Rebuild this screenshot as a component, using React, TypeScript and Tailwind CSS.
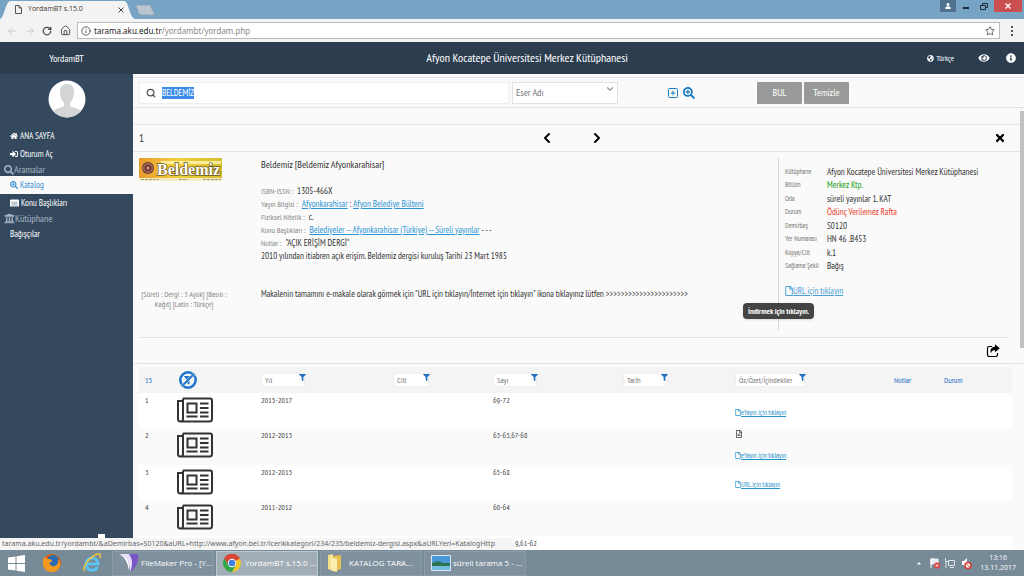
import type { ReactNode } from "react";
import clsx from "clsx";
import {
  FaEye,
  FaFilter,
  FaGlobeAmericas,
  FaHome,
  FaInfoCircle,
  FaRegFile,
  FaRegFileAlt,
  FaSearch,
  FaSearchPlus,
  FaSignInAlt,
  FaTimes,
  FaUniversity,
  FaUser,
} from "react-icons/fa";
import {
  ArrowLeft,
  ArrowRight,
  ChevronDown,
  ChevronLeft,
  ChevronRight,
  House,
  Info,
  RotateCw,
  Search,
  SquarePlus,
  Star,
} from "lucide-react";

const details = [
  { label: "Kütüphane", value: "Afyon Kocatepe Üniversitesi Merkez Kütüphanesi" },
  { label: "Bölüm", value: "Merkez Ktp.", color: "text-[#16a016]" },
  { label: "Oda", value: "süreli yayınlar 1. KAT" },
  { label: "Durum", value: "Ödünç Verilemez Rafta", color: "text-[#f0402c]" },
  { label: "Demirbaş", value: "S0120" },
  { label: "Yer Numarası", value: "HN 46 .B453" },
  { label: "Kopya/Cilt", value: "k.1" },
  { label: "Sağlama Şekli", value: "Bağış" },
];

const issues = [
  { no: 1, year: "2015-2017", issue: "69-72", link: "eYayın için tıklayın", doc: false, height: "h-[35px]", gap: "pt-[12px]" },
  { no: 2, year: "2012-2013", issue: "63-65,67-68", link: "eYayın için tıklayın", doc: true, height: "h-[37px]", gap: "pt-[10px]" },
  { no: 3, year: "2012-2013", issue: "65-68", link: "URL için tıklayın", doc: false, height: "h-[35px]", gap: "pt-[12px]" },
  { no: 4, year: "2011-2012", issue: "60-64", link: "", doc: false, height: "h-[36px]", gap: "" },
];

const filters = [
  { label: "Yıl", width: "w-11" },
  { label: "Cilt", width: "w-9" },
  { label: "Sayı", width: "w-11" },
  { label: "Tarih", width: "w-11" },
  { label: "Öz/Özet/İçindekiler", width: "w-[70px]" },
];

const NewspaperIcon = () => (
  <svg viewBox="0 0 36 26" className="h-[26px] w-9" fill="none" stroke="#333" strokeWidth="2">
    <path d="M6 1.5H33a2 2 0 0 1 2 2V22a2.5 2.5 0 0 1-2.500 2.500H3.500A2.500 2.500 0 0 1 1 22V4H6M6 1.500V22a2.500 2.500 0 0 1-2.500 2.500" />
    <path d="M10.500 6.500h9v9h-9zM9.500 19.500h11M23 6.500h8.500M23 11h8.500M23 15.500h8.500M23 19.500h8.500" />
  </svg>
);

const ShareIcon = () => (
  <svg viewBox="0 0 14 14" className="h-3.5 w-3.5" fill="none">
    <path d="M6 2.500H3.200A1.700 1.700 0 0 0 1.500 4.200v6.600a1.700 1.700 0 0 0 1.700 1.700h6.600a1.700 1.700 0 0 0 1.700-1.700V9" stroke="#000" strokeWidth="1.200" />
    <path d="M9 .3 13.800 4.300 9 8.300V6.200C6.500 6.100 5.400 7 5.200 9.200 3.400 5.500 5.300 3 9 2.700z" fill="#000" />
  </svg>
);

const ClearFilterIcon = () => (
  <svg viewBox="0 0 18 18" className="h-[18px] w-[18px]">
    <circle cx="9" cy="9" r="7.700" fill="none" stroke="#1a74cc" strokeWidth="2.500" />
    <path d="M5 5h8.500L10.500 9v4.500L7.500 12V9z" fill="#1a74cc" />
    <path d="M3.500 14.500l11-11" stroke="#f4f4f4" strokeWidth="3" />
    <path d="M3.500 14.500l11-11" stroke="#1a74cc" strokeWidth="1.800" />
  </svg>
);

const CardIcon = () => (
  <svg viewBox="0 0 10 8" className="h-2 w-[9px]">
    <rect width="10" height="8" rx="1" fill="#fff" />
    <path d="M1.500 3h7M1.500 4.700h7M1.500 6.400h7" stroke="#7c8fa5" strokeWidth=".8" />
  </svg>
);

const CoverBanner = () => (
  <svg viewBox="0 0 83 23" className="h-[23px] w-[83px]" role="img" aria-label="Beldemiz">
    <defs>
      <linearGradient id="cover">
        <stop offset="0" stopColor="#e89a2c" />
        <stop offset=".45" stopColor="#f3cf3c" />
        <stop offset="1" stopColor="#d3bd2b" />
      </linearGradient>
    </defs>
    <rect width="83" height="20" fill="url(#cover)" />
    <path d="M22 3h60v3H22z" fill="#fff6b8" opacity=".8" />
    <circle cx="9" cy="10" r="6" fill="#713a38" />
    <circle cx="9" cy="10" r="4.300" fill="none" stroke="#d79a75" strokeWidth=".8" />
    <circle cx="9" cy="10" r="1.500" fill="#d79a75" />
    <text
      x="18"
      y="17"
      fontFamily="Liberation Serif, serif"
      fontWeight="bold"
      fontSize="16"
      fill="#fff"
      stroke="#6b5a22"
      strokeWidth="1.400"
      paintOrder="stroke"
    >
      Beldemiz
    </text>
    <path d="M0 20h83v3H0z" fill="#f4edc4" />
    <path d="M2 21.500h18M40 21.500h9M64 21.500h18" stroke="#a39b78" strokeWidth="1" strokeDasharray="3 1" />
  </svg>
);

const TabStrip = () => (
  <div className="flex h-[19px] shrink-0 items-start bg-[#77a3c4]">
    <div className="relative h-[19px] w-[134px]">
      <svg viewBox="0 0 160 19" className="absolute left-0 top-0 h-[19px] w-40">
        <path d="M0 19C5 17 5 1 11 1H124c5 0 5 16 11 18z" fill="#f3f3f3" />
        <path d="M136 5h14l5 10h-14c-3 0-5-10-5-10z" fill="#b9c6d1" stroke="#8ba0b1" strokeWidth=".8" />
      </svg>
      <div className="relative flex h-[19px] items-center pl-[15px] pr-2.5 text-[7px] text-[#333]">
        <svg viewBox="0 0 7 9" className="mr-1.5 h-[9px] w-[7px]" fill="none" stroke="#555">
          <path d="M.5.5h3.500l2.500 2.500v5.500h-6zM4 .5V3h2.500" />
        </svg>
        <span className="flex-1">YordamBT s.15.0</span>
        <button aria-label="Sekmeyi kapat">
          <svg viewBox="0 0 6 6" className="h-1.5 w-1.5" stroke="#444">
            <path d="M.5.500l5 5M5.500.500l-5 5" />
          </svg>
        </button>
      </div>
    </div>
    <div className="flex-1" />
    <button aria-label="Profil" className="flex h-3 w-4 items-center justify-center bg-[#4f718c] text-white">
      <FaUser className="h-1.5 w-1.5" />
    </button>
    <button aria-label="Simge durumuna küçült" className="flex h-3 w-5 items-center justify-center">
      <span className="mt-1 h-0.5 w-1.5 bg-[#1d2b38]" />
    </button>
    <button aria-label="Önceki boyut" className="flex h-3 w-4 items-center justify-center">
      <svg viewBox="0 0 8 7" className="h-[7px] w-2" fill="none" stroke="#1d2b38">
        <path d="M2.500 2V.5h5v4H6M.5 2.500h5v4h-5z" />
      </svg>
    </button>
    <button aria-label="Kapat" className="ml-0.5 mr-0.5 flex h-3 w-7 items-center justify-center bg-[#c9504f]">
      <svg viewBox="0 0 6 6" className="h-1.5 w-1.5" stroke="#fff" strokeWidth="1.300">
        <path d="M.5.500l5 5M5.500.500l-5 5" />
      </svg>
    </button>
  </div>
);

const AddressBar = () => (
  <div className="flex h-[23px] shrink-0 items-center bg-[#f3f3f3] pl-1.5">
    <ArrowLeft className="h-3 w-3 text-[#ccc]" />
    <ArrowRight className="ml-1.5 h-3 w-3 text-[#ccc]" />
    <RotateCw className="ml-1.5 h-2.5 w-2.5 text-[#444]" strokeWidth={3} />
    <House className="ml-2 h-[11px] w-[11px] text-[#444]" strokeWidth={2} />
    <div className="ml-1.5 flex h-[17px] flex-1 items-center border border-[#bbb] bg-white pl-[3px] pr-1 text-[8px]">
      <Info className="mr-[3px] h-2.5 w-2.5 shrink-0 text-[#444]" />
      <span className="flex-1 font-['Noto_Sans',sans-serif] text-[#888]">
        <span className="text-[#222]">tarama.aku.edu.tr</span>/yordambt/yordam.php
      </span>
      <Star className="h-2.5 w-2.5 text-[#444]" />
    </div>
    <button aria-label="Menü" className="flex w-6 flex-col items-center gap-0.5">
      <span className="h-0.5 w-0.5 bg-[#555]" />
      <span className="h-0.5 w-0.5 bg-[#555]" />
      <span className="h-0.5 w-0.5 bg-[#555]" />
    </button>
  </div>
);

const AppHeader = () => (
  <header className="flex h-8 shrink-0 items-center bg-[#2c3d50] text-white">
    <div className="w-[133px] text-center text-[10px]">YordamBT</div>
    <h1 className="flex-1 pr-1.5 text-center text-[12px]">Afyon Kocatepe Üniversitesi Merkez Kütüphanesi</h1>
    <div className="mr-2 flex items-center">
      <button className="flex items-center gap-0.5 text-[8px]">
        <FaGlobeAmericas className="h-[7px] w-[7px]" /> Türkçe
      </button>
      <button aria-label="Görünüm" className="ml-6">
        <FaEye className="h-2.5 w-3" />
      </button>
      <button aria-label="Bilgi" className="ml-4">
        <FaInfoCircle className="h-2.5 w-2.5" />
      </button>
    </div>
  </header>
);

const SideLink = ({ icon, children, active }: { icon?: ReactNode; children: ReactNode; active?: boolean }) => (
  <a
    href="#"
    className={clsx(
      "flex h-[18px] items-center gap-0.5 pl-2.5 text-[9px]",
      active ? "bg-[#fafafa] text-[#3c8fd0]" : "text-white"
    )}
  >
    {icon}
    {children}
  </a>
);

const SideHeading = ({ icon, children }: { icon: ReactNode; children: ReactNode }) => (
  <div className="flex h-[13px] items-center pl-1 text-[10px] text-[#a6b5c4]">
    {icon}
    {children}
  </div>
);

const Sidebar = () => (
  <nav className="relative w-[133px] shrink-0 bg-[#34495e]">
    <svg viewBox="0 0 38 38" className="mx-auto mb-[9px] mt-[6px] h-[38px] w-[38px]">
      <defs>
        <clipPath id="avatar">
          <circle cx="19" cy="19" r="18.500" />
        </clipPath>
      </defs>
      <circle cx="19" cy="19" r="18.500" fill="#fff" />
      <g clipPath="url(#avatar)" fill="#d3d5d6">
        <path d="M19 4c-5 0-7 3.500-7 8 0 5 2 9 4 11v3c-3 2-10 2-12 7v6h30v-6c-2-5-9-5-12-7v-3c2-2 4-6 4-11 0-4.500-2-8-7-8z" />
      </g>
    </svg>
    <SideLink icon={<FaHome className="h-2 w-2" />}>ANA SAYFA</SideLink>
    <SideLink icon={<FaSignInAlt className="h-2 w-2" />}>Oturum Aç</SideLink>
    <SideHeading icon={<FaSearch className="h-2.5 w-2.5" />}>Aramalar</SideHeading>
    <SideLink active icon={<FaSearchPlus className="h-2 w-2" />}>
      Katalog
    </SideLink>
    <SideLink icon={<CardIcon />}>Konu Başlıkları</SideLink>
    <SideHeading icon={<FaUniversity className="h-[11px] w-[11px]" />}>Kütüphane</SideHeading>
    <SideLink>Bağışçılar</SideLink>
    <span className="absolute bottom-[10px] left-[98px] h-1.5 w-[7px] bg-white" />
  </nav>
);

const SearchBar = () => (
  <form className="mt-[3px] flex h-[31px] shrink-0 items-center border-y border-[#dfe3e8] pl-1.5">
    <label className="flex h-[22px] w-[370px] items-center border border-[#eee] bg-white pl-1.5 text-[10px]">
      <Search className="mr-[6px] h-2.5 w-2.5 text-[#555]" strokeWidth={3} />
      <span className="relative flex flex-1 items-center">
        <span className="absolute left-0 h-3 w-8 bg-[#3b8be8]" />
        <input aria-label="Arama" defaultValue="BELDEMİZ" className="relative w-full bg-transparent text-[9px] text-white outline-none" />
      </span>
    </label>
    <div className="relative ml-[3px] h-[22px] w-[106px] border border-[#e2e2e2] bg-white">
      <select aria-label="Arama alanı" className="block h-5 w-full appearance-none bg-transparent pl-[3px] text-[10px] leading-5 text-[#777]">
        <option>Eser Adı</option>
      </select>
      <ChevronDown className="pointer-events-none absolute right-0.5 top-px h-2.5 w-2.5 text-[#999]" strokeWidth={3} />
    </div>
    <button type="button" aria-label="Alan ekle" className="ml-[49px] text-[#1b7cc4]">
      <SquarePlus className="h-3 w-3" />
    </button>
    <button type="button" aria-label="Detaylı arama" className="ml-1 text-[#1b7cc4]">
      <FaSearchPlus className="h-3 w-3" />
    </button>
    <button type="button" className="ml-[62px] h-[22px] w-[45px] rounded-[1px] bg-[#999] text-[10px] text-white">
      BUL
    </button>
    <button type="button" className="ml-0.5 h-[22px] w-[45px] rounded-[1px] bg-[#999] text-[10px] text-white">
      Temizle
    </button>
  </form>
);

const Field = ({ label, children }: { label: string; children: ReactNode }) => (
  <p className="h-[13px]">
    <span className="mr-1 text-[8px] text-[#888]">{label} :</span>
    {children}
  </p>
);

const link = "text-[#2a95d5] underline";

const RecordDetail = () => (
  <section className="ml-1.5 mr-4 flex h-[186px] shrink-0 border-b border-[#dfe2e6] pt-1.5">
    <div className="w-[122px] shrink-0">
      <CoverBanner />
      <p className="mt-[108px] w-[90px] text-center text-[8px] leading-[10px] text-[#888]">
        [Süreli : Dergi : 3 Aylık] [Basılı : Kağıt] [Latin : Türkçe]
      </p>
    </div>
    <div className="min-w-0 flex-1 text-[9px] leading-[13px] text-[#333]">
      <h2 className="mb-[13px] text-[10px]">Beldemiz [Beldemiz Afyonkarahisar]</h2>
      <Field label="ISBN-ISSN">1305-466X</Field>
      <Field label="Yayın Bilgisi">
        <a href="#" className={link}>Afyonkarahisar</a> : <a href="#" className={link}>Afyon Belediye Bülteni</a>
      </Field>
      <Field label="Fiziksel Nitelik">c.</Field>
      <Field label="Konu Başlıkları">
        <a href="#" className={link}>Belediyeler -- Afyonkarahisar (Türkiye) -- Süreli yayınlar</a> - - -
      </Field>
      <Field label="Notlar">"AÇIK ERİŞİM DERGİ"</Field>
      <p>2010 yılından itiabren açık erişim. Beldemiz dergisi kuruluş Tarihi 23 Mart 1985</p>
      <p className="mt-[25px] whitespace-nowrap">
        Makalenin tamamını e-makale olarak görmek için "URL için tıklayın/İnternet için tıklayın" ikona tıklayınız lütfen {">>>>>>>>>>>>>>>>>>>>>>"}
      </p>
    </div>
    <div className="relative mb-[7px] w-[230px] shrink-0 border-l border-[#d5d7da] pl-1.5 pt-[7px]">
      <dl className="text-[9px] leading-[13px] text-[#333]">
        {details.map((item) => (
          <div key={item.label} className="flex h-[13px] whitespace-nowrap even:mb-px">
            <dt className="w-[42px] shrink-0 text-[7px] text-[#777]">{item.label}</dt>
            <dd className={item.color}>{item.value}</dd>
          </div>
        ))}
      </dl>
      <a href="#" className="mt-3 flex items-center text-[9px] leading-[14px] text-[#4aa0d6] underline">
        <FaRegFile className="h-2.5 w-2" />
        URL için tıklayın
      </a>
      <div role="tooltip" className="absolute -left-[36px] top-[145px] rounded-sm bg-[#444] px-[5px] text-[8px] font-bold leading-4 whitespace-nowrap text-white shadow">
        İndirmek için tıklayın.
      </div>
    </div>
  </section>
);

const IssueTable = () => (
  <table className="ml-1.5 mt-[3px] w-[calc(100%-18px)] table-fixed text-left text-[8px] text-[#444]">
    <colgroup>
      <col className="w-[38px]" />
      <col className="w-[84px]" />
      <col className="w-[132px]" />
      <col className="w-[100px]" />
      <col className="w-[130px]" />
      <col className="w-[112px]" />
      <col className="w-[159px]" />
      <col className="w-[50px]" />
      <col className="w-[68px]" />
    </colgroup>
    <thead>
      <tr className="h-[26px] bg-[#f4f4f4]">
        <th className="pl-1.5 font-normal text-[#1a6ec8]">15</th>
        <th>
          <button aria-label="Filtreleri temizle" className="block pl-0.5">
            <ClearFilterIcon />
          </button>
        </th>
        {filters.map((filter) => (
          <th key={filter.label}>
            <div className="relative flex w-fit">
              <input
                aria-label={filter.label}
                placeholder={filter.label}
                className={clsx("h-3.5 border border-[#eee] bg-white pl-[3px] text-[8px] font-normal placeholder:text-[#777]", filter.width)}
              />
              <FaFilter className="absolute -right-px top-px h-[7px] w-[7px] text-[#246fc0]" />
            </div>
          </th>
        ))}
        <th className="font-normal">
          <a href="#" className="text-[#1a6ec8]">Notlar</a>
        </th>
        <th className="font-normal">
          <a href="#" className="text-[#1a6ec8]">Durum</a>
        </th>
      </tr>
    </thead>
    <tbody>
      {issues.map((row) => (
        <tr key={row.no} className={clsx("align-top leading-[15px] odd:bg-white", row.height)}>
          <td className="pl-1.5">{row.no}</td>
          <td className="pt-1">
            <NewspaperIcon />
          </td>
          <td>{row.year}</td>
          <td />
          <td>{row.issue}</td>
          <td />
          <td>
            {row.doc && <FaRegFileAlt className="mt-0.5 h-2 w-2" />}
            {row.link && (
              <div className={row.gap}>
                <a href="#" className="flex items-center text-[7px] text-[#2492cc] underline">
                  <FaRegFile className="h-[7px] w-1.5" />
                  {row.link}
                </a>
              </div>
            )}
          </td>
          <td />
          <td />
        </tr>
      ))}
      <tr className="bg-white align-top leading-[14px]">
        <td colSpan={4} />
        <td className="pl-[22px]">9,61-62</td>
        <td colSpan={4} />
      </tr>
    </tbody>
  </table>
);

const FirefoxIcon = () => (
  <svg viewBox="0 0 20 20" className="h-5 w-5">
    <circle cx="10" cy="10" r="9" fill="#e66000" />
    <circle cx="11" cy="8" r="6" fill="#2b6cb5" />
    <path d="M2 4c2 1 3 2 5 2 3 0 4 2 2 3-2 0-2 3 1 4 4 1 7-2 6-7 5 7 0 13-6 13C2 19-1 11 2 4z" fill="#f29a1f" />
  </svg>
);

const ExplorerIcon = () => (
  <svg viewBox="0 0 20 20" className="h-5 w-5" fill="none">
    <path d="M4 11h12c0-8-12-8-12 0 0 7 9 8 11.500 3" stroke="#5cc4f0" strokeWidth="3" />
    <path d="M3 18C-1 15 8 3 16 1c3-.5 3 2 1.500 4" stroke="#f0c63c" strokeWidth="1.500" />
  </svg>
);

const FileMakerIcon = () => (
  <svg viewBox="0 0 20 18" className="h-[18px] w-5">
    <path d="M0 0c8 1 11 7 10 17C9 9 6 3 0 0z" fill="#fff" />
    <path d="M1 0h11c4 5 3 13-1 18C11 9 8 3 1 0z" fill="#e6dcfa" />
    <path d="M10 0h9c1 7-2 14-8 18 3-7 3-12-1-18z" fill="#7954c7" />
  </svg>
);

const ChromeIcon = () => (
  <svg viewBox="0 0 18 18" className="h-[18px] w-[18px]">
    <circle cx="9" cy="9" r="9" fill="#f4c62d" />
    <path d="M9 9 1.200 4.500A9 9 0 0 1 16.800 4.500z" fill="#d94535" />
    <path d="M9 9 1.200 4.500A9 9 0 0 0 9 18l3.500-6z" fill="#36a852" />
    <path d="M9 5h8.100a9 9 0 0 0-.3-.5A9 9 0 0 0 1.200 4.500L5 10z" fill="#d94535" />
    <circle cx="9" cy="9" r="4.200" fill="#fff" />
    <circle cx="9" cy="9" r="3.300" fill="#3f7fe0" />
  </svg>
);

const FolderIcon = () => (
  <svg viewBox="0 0 16 20" className="h-5 w-4">
    <path d="M1 2l5-1v17l-5-2z" fill="#f7e08c" />
    <path d="M6 3l8-1v14l-8 3z" fill="#e8bf55" />
    <path d="M4 4l6 2v13l-6-2z" fill="#fbedaf" />
  </svg>
);

const PictureIcon = () => (
  <svg viewBox="0 0 20 16" className="h-4 w-5">
    <rect width="20" height="16" rx="1" fill="#d9ecf6" />
    <rect x="1" y="1" width="18" height="7" fill="#4a9ada" />
    <path d="M1 8l6-2 5 2h7v3H1z" fill="#2f7250" />
    <rect x="1" y="11" width="18" height="4" fill="#74bce0" />
  </svg>
);

const tasks = [
  { title: "FileMaker Pro - [Y...", icon: <FileMakerIcon />, active: false },
  { title: "YordamBT s.15.0 ...", icon: <ChromeIcon />, active: true },
  { title: "KATALOG TARA...", icon: <FolderIcon />, active: false },
  { title: "süreli tarama 5 - ...", icon: <PictureIcon />, active: false },
];

const Taskbar = () => (
  <footer className="flex h-[26px] shrink-0 items-center bg-[#768a98] text-white">
    <button aria-label="Başlat" className="ml-2">
      <svg viewBox="0 0 17 17" className="h-[17px] w-[17px]" fill="#fff">
        <path d="M0 2.500l7.500-1V8H0zM8.500 1.300 17 0v8H8.500zM0 9h7.500v6.500L0 14.500zM8.500 9H17v8l-8.500-1.300z" />
      </svg>
    </button>
    <button aria-label="Firefox" className="ml-[17px]"><FirefoxIcon /></button>
    <button aria-label="Internet Explorer" className="ml-5"><ExplorerIcon /></button>
    <div className="ml-2.5 flex gap-0.5">
      {tasks.map((task) => (
        <button
          key={task.title}
          className={clsx(
            "flex h-[25px] w-[102px] items-center border text-[8px]",
            task.active ? "border-[#bcc7cf] bg-[#a2aeb7]" : "border-[#8b9ba7] bg-[#7f919e]"
          )}
        >
          <span className="ml-1.5 flex w-[22px] shrink-0 justify-start">{task.icon}</span>
          <span className="whitespace-nowrap">{task.title}</span>
        </button>
      ))}
    </div>
    <div className="flex-1" />
    <svg viewBox="0 0 56 12" className="mr-2 h-3 w-14" fill="none">
      <path d="M1 7.500 3 5l2 2.500z" fill="#fff" />
      <path d="M15 11V1.500M15 2c3-1 4 1 7 0v5c-3 1-4-1-7 0z" stroke="#fff" fill="#e5eaee" />
      <circle cx="21" cy="8.500" r="3" fill="#d83a34" />
      <path d="M19.700 7.200l2.600 2.600M22.300 7.200l-2.600 2.600" stroke="#fff" />
      <path d="M32.500 3.500h6v5h-6zM34 10.500h4M29.500 1v3.500h3M30 4.500V11" stroke="#dfe6eb" />
      <path d="M46 4h2l3-3v10l-3-3h-2z" fill="#fff" />
      <circle cx="52" cy="8.500" r="3" fill="#fff" stroke="#d83a34" strokeWidth="1.500" />
      <path d="M50 6.500l4 4" stroke="#d83a34" />
    </svg>
    <div className="mr-2 text-center text-[7px] leading-[10px]">
      <div>13:16</div>
      <div>13.11.2017</div>
    </div>
  </footer>
);

const App = () => {
  return (
    <div className="relative flex h-screen flex-col overflow-hidden bg-[#fafafa] font-['Open_Sans','Noto_Sans',sans-serif]">
      <TabStrip />
      <AddressBar />
      <div className="flex min-h-0 flex-1 flex-col font-['PT_Sans_Narrow','Roboto_Condensed',Lato,sans-serif]">
        <AppHeader />
        <div className="flex min-h-0 flex-1">
          <Sidebar />
          <main className="relative flex min-w-0 flex-1 flex-col overflow-hidden">
            <SearchBar />
            {/* Result pager */}
            <div className="mt-4 flex h-7 shrink-0 items-center border-y border-[#e2e4e7] pl-1.5 pr-[19px]">
              <span className="text-[11px] text-[#333]">1</span>
              <button aria-label="Önceki" className="ml-[395px]">
                <ChevronLeft className="h-4 w-4" strokeWidth={3} />
              </button>
              <button aria-label="Sonraki" className="ml-[34px]">
                <ChevronRight className="h-4 w-4" strokeWidth={3} />
              </button>
              <button aria-label="Kapat" className="ml-auto">
                <FaTimes className="h-3 w-2.5" />
              </button>
            </div>
            <RecordDetail />
            <div className="flex h-[26px] shrink-0 items-center justify-end border-b border-[#dfe2e6] pr-6">
              <button aria-label="Paylaş">
                <ShareIcon />
              </button>
            </div>
            <IssueTable />
            <span className="absolute right-0 top-[37px] h-[237px] w-1 bg-[#c1c1c1]" />
          </main>
        </div>
      </div>
      <div className="absolute bottom-[26px] left-0 h-3 w-[514px] overflow-hidden whitespace-nowrap bg-[#f5f5f5] pl-0.5 font-['Noto_Sans',sans-serif] text-[7px] leading-3 text-[#666]">
        tarama.aku.edu.tr/yordambt/&aDemirbas=S0120&aURL=http://www.afyon.bel.tr/icerikkategori/234/235/beldemiz-dergisi.aspx&aURLYeri=KatalogHttp
      </div>
      <Taskbar />
    </div>
  );
};

export default App;
